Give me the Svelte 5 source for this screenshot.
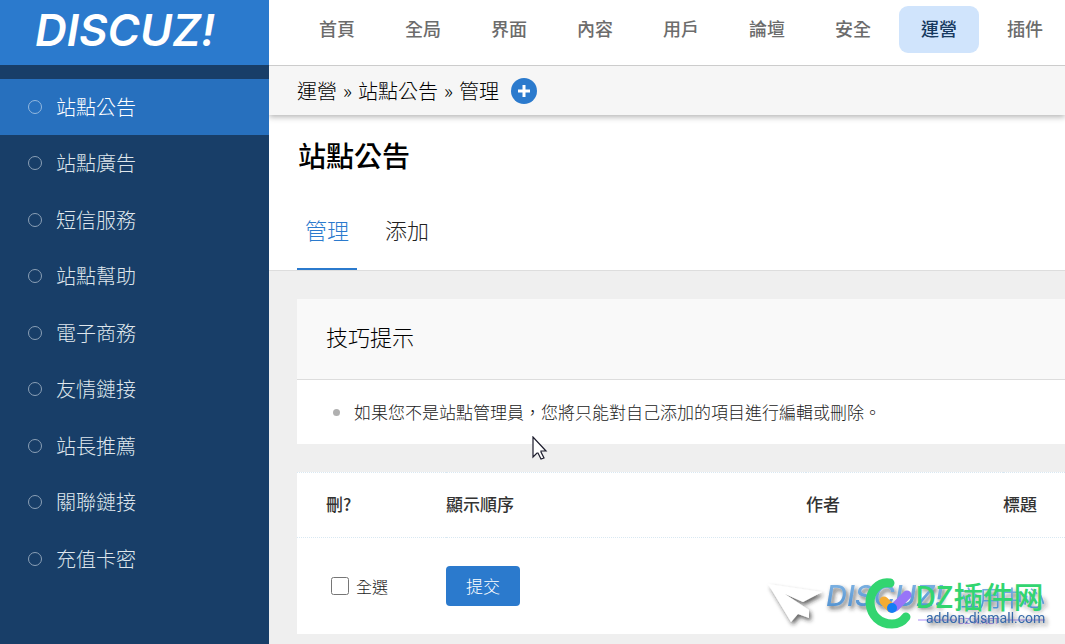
<script>
  const menu = ['站點公告', '站點廣告', '短信服務', '站點幫助', '電子商務', '友情鏈接', '站長推薦', '關聯鏈接', '充值卡密'];
  const sections = ['首頁', '全局', '界面', '內容', '用戶', '論壇', '安全', '運營', '插件'];
  let current = $state('站點公告');
  let section = $state('運營');
  let all = $state(false);
</script>

<div class="app">
  <aside>
    <a class="logo" href="#home">DISCUZ!</a>
    <nav class="side">
      <ul>
        {#each menu as item}
          <li class:active={item === current}>
            <a href="#menu" onclick={() => (current = item)}><i></i>{item}</a>
          </li>
        {/each}
      </ul>
    </nav>
  </aside>

  <main>
    <nav class="top">
      {#each sections as s}
        <a href="#section" class:active={s === section} onclick={() => (section = s)}>{s}</a>
      {/each}
    </nav>
    <div class="crumbs">
      <span>運營</span><span>»</span><span>站點公告</span><span>»</span><span>管理</span>
      <button class="add" aria-label="添加">
        <svg width="26" height="26" viewBox="0 0 26 26"><circle cx="13" cy="13" r="13" fill="#2b7acd" /><path d="M13 7v12M7 13h12" stroke="#fff" stroke-width="3" /></svg>
      </button>
    </div>

    <header>
      <h1>站點公告</h1>
      <div class="tabs">
        <a class="active" href="#manage">管理</a>
        <a href="#new">添加</a>
      </div>
    </header>

    <div class="content">
      <section class="tips">
        <h2>技巧提示</h2>
        <ul><li>如果您不是站點管理員，您將只能對自己添加的項目進行編輯或刪除。</li></ul>
        <svg class="pointer" width="16" height="25" viewBox="0 0 16 25"><path d="M1 1v20l4-4h1l3 6 3-1-3-6v-1h5z" fill="#fff" stroke="#1c1c2c" stroke-width="1.2" /></svg>
      </section>

      <section class="list">
        <table>
          <colgroup><col class="c1" /><col class="c2" /><col class="c3" /><col /></colgroup>
          <thead>
            <tr><th>刪?</th><th>顯示順序</th><th>作者</th><th>標題</th></tr>
          </thead>
          <tbody>
            <tr>
              <td><label><input type="checkbox" bind:checked={all} />全選</label></td>
              <td colspan="3"><button class="submit">提交</button></td>
            </tr>
          </tbody>
        </table>
        <div class="mark">
          <svg width="290" height="64" viewBox="0 0 290 64">
            <defs>
              <filter id="shade" x="-20%" y="-20%" width="150%" height="160%"><feDropShadow dx="2" dy="3" stdDeviation="2" flood-color="#222" flood-opacity=".7" /></filter>
              <linearGradient id="sky" x2="0" y2="1"><stop offset="0" stop-color="#86b8e6" /><stop offset="1" stop-color="#4a8ccd" /></linearGradient>
            </defs>
            <g filter="url(#shade)">
              <path d="M3 14L57 22 38 32 20 24 44 40 44 48 33 44 26 52z" fill="#fff" />
              <text x="61" y="36" class="old" fill="url(#sky)">DISCUZ!</text>
              <text x="192" y="36" class="oldcn" fill="url(#sky)">应用中心</text>
            </g>
            <path d="M125 13C113 11 105 22 105 33C106 46 115 54 127 54C133 54 138 51 141 47" fill="none" stroke="#32d570" stroke-width="9" stroke-linecap="round" />
            <path d="M119 31L126 38" stroke="#f4ac32" stroke-width="9" stroke-linecap="round" />
            <path d="M142 25L130 37" stroke="#9874f8" stroke-width="9" stroke-linecap="round" />
            <circle cx="127" cy="38" r="5" fill="#147df5" />
            <path d="M153 50H192M240 50H280" stroke="#a98df5" />
            <text x="193" y="54" class="tiny">DZ-X.NET</text>
            <text x="161" y="53" class="url" filter="url(#shade)">addon.dismall.com</text>
            <text x="150" y="38" class="green">DZ插件网</text>
          </svg>
        </div>
      </section>
    </div>
  </main>
</div>

<style>
  :global(body) { margin: 0; background: #efefef; }
  .app { display: grid; grid-template-columns: 269px minmax(0, 1fr); min-height: 100vh; overflow: hidden; font: 300 17px/24px "Noto Sans CJK TC", sans-serif; color: #222; }
  a { color: inherit; text-decoration: none; }
  ul { list-style: none; margin: 0; padding: 0; }
  button { border: 0; padding: 0; font: inherit; cursor: pointer; }
  aside { background: #183e68; color: #dfe6ec; }
  .logo { display: flex; align-items: center; height: 65px; box-sizing: border-box; padding: 0 0 6px 35px; background: #2b7acd; color: #fff; font: italic 600 44px/44px Inter, sans-serif; }
  .side { padding-top: 14px; }
  .side li:nth-child(even) { margin-bottom: 1px; }
  .side a { display: flex; align-items: center; gap: 14px; height: 56px; padding-left: 28px; font-size: 20px; }
  .side i { width: 12px; height: 12px; border: 1px solid #8ba0b6; border-radius: 50%; }
  .side .active { background: #2770be; color: #fff; }
  .side .active i { border-color: #93b8df; }
  .top { display: flex; gap: 6px; padding: 6px 0 12px 28px; background: #fff; border-bottom: 1px solid #ccc; white-space: nowrap; }
  .top a { padding: 0 22px; height: 47px; line-height: 45px; border-radius: 9px; font-size: 18px; font-weight: 500; color: #6c6c6c; }
  .top .active { background: #d0e4fc; color: #16395f; }
  .crumbs { position: relative; display: flex; align-items: center; gap: 6px; height: 49px; padding-left: 28px; background: #f6f6f6; color: #000; font-size: 20px; box-shadow: 0 2px 6px rgba(0, 0, 0, .3); clip-path: inset(0 0 -12px 0); }
  .add { display: flex; margin-left: 6px; background: none; }
  header { padding: 18px 28px 0 29px; background: #fff; border-bottom: 1px solid #ddd; }
  h1 { margin: 0; font-size: 28px; line-height: 44px; font-weight: 500; color: #000; }
  .tabs { display: flex; gap: 20px; margin: 14px 0 0 -1px; font-size: 22px; }
  .tabs a { padding: 0 8px; line-height: 77px; border-bottom: 2px solid transparent; }
  .tabs .active { color: #2b7acd; border-color: #2b7acd; }
  .content { padding: 28px 0 10px 28px; }
  section { position: relative; background: #fff; }
  h2 { margin: 0; padding: 0 29px 6px; background: #f9f9f9; border-bottom: 1px solid #ddd; font-size: 22px; line-height: 74px; font-weight: 300; color: #000; }
  .tips li { display: flex; align-items: center; gap: 14px; padding: 20px 0 20px 36px; }
  .tips li::before { content: ""; width: 7px; height: 7px; border-radius: 50%; background: #b0b0b0; }
  .pointer { position: absolute; left: 235px; top: 137px; z-index: 2; }
  .list { margin-top: 28px; }
  table { width: 100%; table-layout: fixed; border-collapse: collapse; }
  .c1 { width: 149px; }
  .c2 { width: 360px; }
  .c3 { width: 197px; }
  th, td { padding: 0; text-align: left; border-top: 1px dotted #d9e8f2; }
  th:first-child { padding-left: 29px; }
  td:first-child { padding-left: 34px; }
  th { height: 62px; padding-bottom: 2px; font-weight: 500; white-space: nowrap; color: #333; }
  td { height: 96px; }
  label { display: flex; align-items: center; gap: 7px; font-size: 16px; }
  input { width: 18px; height: 18px; margin: 0; }
  .submit { display: block; padding: 0 20px; line-height: 40px; border-radius: 4px; background: #2b7acd; color: #fff; font-size: 17px; }
  .mark { position: absolute; right: 10px; bottom: 0; pointer-events: none; }
  .mark svg { display: block; }
  .old { font: italic 500 29px Inter, sans-serif; }
  .oldcn { font: 400 22px "Noto Sans CJK SC", sans-serif; }
  .url { font: 14px Roboto, sans-serif; fill: #3568a8; }
  .tiny { font: 9px "Liberation Sans", sans-serif; fill: #a98df5; }
  .green { font: 500 30px "Noto Sans CJK SC", sans-serif; fill: #32d570; }
</style>
